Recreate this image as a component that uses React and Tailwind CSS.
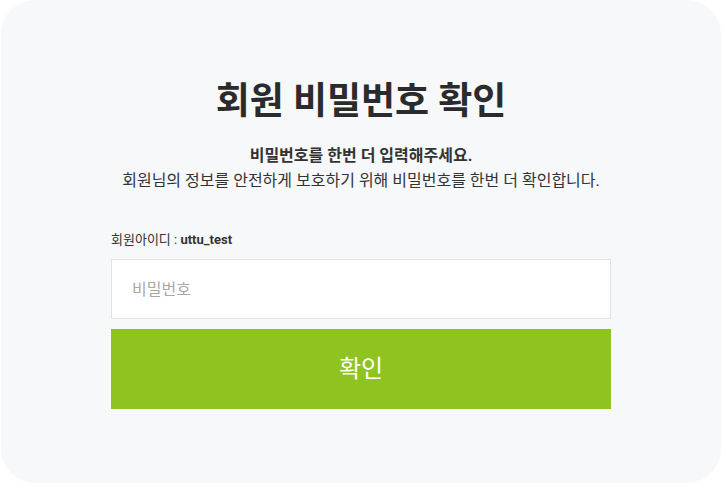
export default function App() {
  const font = { fontFamily: 'Roboto, "Noto Sans CJK KR", sans-serif' };
  return (
    <div className="w-[723px] h-[488px] bg-white" style={font}>
      <div className="ml-px w-[720px] h-[483px] rounded-[34px] bg-[#f7f8fa] flex flex-col items-center pt-[79px]">
        <h1 className="text-[37px] leading-[46px] font-bold text-[#2b2b2b]">회원 비밀번호 확인</h1>
        <div className="mt-[18px] text-center text-[16px] leading-[25px] text-[#333]">
          <p className="font-bold">비밀번호를 한번 더 입력해주세요.</p>
          <p>회원님의 정보를 안전하게 보호하기 위해 비밀번호를 한번 더 확인합니다.</p>
        </div>
        <div className="mt-[37px] w-[500px] flex flex-col">
          <div className="text-[13px] leading-[20px] text-[#333]">
            회원아이디 : <span className="font-bold">uttu_test</span>
          </div>
          <input
            type="password"
            placeholder="비밀번호"
            className="mt-[9px] h-[60px] w-full border border-[#e2e2e2] bg-white px-[20px] text-[16px] outline-none placeholder:text-[#a8a8a8]"
          />
          <button className="mt-[10px] h-[80px] w-full bg-[#8fc31f] text-white text-[24px] font-normal">확인</button>
        </div>
      </div>
    </div>
  );
}
